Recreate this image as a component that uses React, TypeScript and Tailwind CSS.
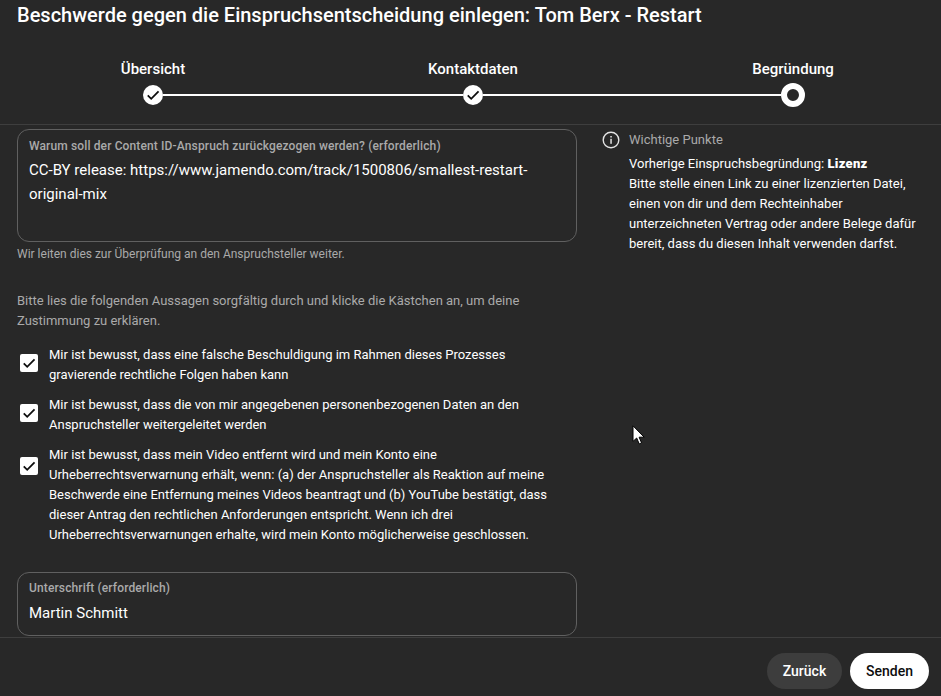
function Check({ size = 20 }: { size?: number }) {
  return (
    <svg width={size} height={size} viewBox="0 0 24 24" fill="none">
      <path d="M5 12.5l4.6 4.6L19.4 7.3" stroke="#0d0d0d" strokeWidth="2.4" />
    </svg>
  );
}

function StepDone() {
  return (
    <div className="flex h-5 w-5 shrink-0 items-center justify-center rounded-full bg-white">
      <Check size={18} />
    </div>
  );
}

function Agreement({ lines, long }: { lines: string[]; long?: boolean }) {
  return (
    <div className="flex items-start">
      <div
        className={`ml-[3px] flex h-[18px] w-[18px] shrink-0 items-center justify-center rounded-[2px] bg-white ${
          long ? "mt-[12px]" : "mt-[9px]"
        }`}
      >
        <Check size={22} />
      </div>
      <p className="ml-[11px] text-[13px] leading-5 text-white">
        {lines.map((l) => (
          <span key={l} className="block whitespace-nowrap">
            {l}
          </span>
        ))}
      </p>
    </div>
  );
}

export default function App() {
  return (
    <div className="relative flex h-[696px] w-[941px] flex-col overflow-hidden bg-[#282828] font-['Roboto',sans-serif] text-white">
      {/* Header */}
      <div className="h-[125px] shrink-0 border-b border-[#3e3e3e]">
        <h1 className="ml-[17px] pt-[3px] text-[20px] leading-6 font-medium">
          Beschwerde gegen die Einspruchsentscheidung einlegen: Tom Berx - Restart
        </h1>
        <div className="mt-[32px] ml-[93px] flex w-[760px] justify-between text-[15px] leading-5 font-medium">
          <span className="w-[120px] text-center">Übersicht</span>
          <span className="w-[120px] text-center">Kontaktdaten</span>
          <span className="w-[120px] text-center">Begründung</span>
        </div>
        <div className="mt-[4px] ml-[143px] flex items-center">
          <StepDone />
          <div className="h-0.5 w-[300px] bg-white" />
          <StepDone />
          <div className="h-0.5 w-[298px] bg-white" />
          <div className="h-6 w-6 shrink-0 rounded-full border-[6px] border-white" />
        </div>
      </div>

      {/* Body */}
      <div className="flex min-h-0 flex-1 overflow-hidden pt-1 pl-[17px]">
        <div className="w-[560px] shrink-0">
          <div className="h-[113px] rounded-xl border border-[#606060] px-[11px] pt-[7px]">
            <div className="text-[12px] leading-[18px] font-medium tracking-[0.13px] text-[#aaaaaa]">
              Warum soll der Content ID-Anspruch zurückgezogen werden? (erforderlich)
            </div>
            <div className="mt-[3px] text-[15px] leading-6">
              CC-BY release: https://www.jamendo.com/track/1500806/smallest-restart-
              <br />
              original-mix
            </div>
          </div>
          <p className="mt-[3px] text-[12px] leading-[18px] text-[#aaaaaa]">
            Wir leiten dies zur Überprüfung an den Anspruchsteller weiter.
          </p>
          <p className="mt-[28px] text-[13px] leading-5 text-[#aaaaaa]">
            Bitte lies die folgenden Aussagen sorgfältig durch und klicke die Kästchen an, um deine
            <br />
            Zustimmung zu erklären.
          </p>
          <div className="mt-[14px] flex flex-col gap-[10px]">
            <Agreement
              lines={[
                "Mir ist bewusst, dass eine falsche Beschuldigung im Rahmen dieses Prozesses",
                "gravierende rechtliche Folgen haben kann",
              ]}
            />
            <Agreement
              lines={[
                "Mir ist bewusst, dass die von mir angegebenen personenbezogenen Daten an den",
                "Anspruchsteller weitergeleitet werden",
              ]}
            />
            <Agreement
              long
              lines={[
                "Mir ist bewusst, dass mein Video entfernt wird und mein Konto eine",
                "Urheberrechtsverwarnung erhält, wenn: (a) der Anspruchsteller als Reaktion auf meine",
                "Beschwerde eine Entfernung meines Videos beantragt und (b) YouTube bestätigt, dass",
                "dieser Antrag den rechtlichen Anforderungen entspricht. Wenn ich drei",
                "Urheberrechtsverwarnungen erhalte, wird mein Konto möglicherweise geschlossen.",
              ]}
            />
          </div>
          <div className="mt-[27px] h-[64px] rounded-xl border border-[#606060] px-[11px] pt-[6px]">
            <div className="text-[12px] leading-[18px] font-medium tracking-[0.13px] text-[#aaaaaa]">
              Unterschrift (erforderlich)
            </div>
            <div className="mt-[4px] text-[15px] leading-6">Martin Schmitt</div>
          </div>
        </div>

        <div className="ml-[24px] flex items-start pt-[1px]">
          <svg width="20" height="20" viewBox="0 0 20 20" fill="none" className="shrink-0">
            <circle cx="10" cy="10" r="7.8" stroke="#e4e4e4" strokeWidth="1.4" />
            <rect x="9.3" y="8.8" width="1.5" height="5" fill="#e4e4e4" />
            <rect x="9.3" y="6" width="1.5" height="1.5" fill="#e4e4e4" />
          </svg>
          <div className="ml-[8px]">
            <div className="text-[13px] leading-5 text-[#aaaaaa]">Wichtige Punkte</div>
            <div className="mt-[4px] text-[13px] leading-5 whitespace-nowrap">
              Vorherige Einspruchsbegründung: <b className="font-black tracking-[0.3px]">Lizenz</b>
              <br />
              Bitte stelle einen Link zu einer lizenzierten Datei,
              <br />
              einen von dir und dem Rechteinhaber
              <br />
              unterzeichneten Vertrag oder andere Belege dafür
              <br />
              bereit, dass du diesen Inhalt verwenden darfst.
            </div>
          </div>
        </div>
      </div>

      {/* Footer */}
      <div className="flex h-[59px] shrink-0 items-start justify-end gap-2 border-t border-[#3e3e3e] pt-[15px] pr-3">
        <button className="h-9 w-[75px] rounded-full bg-[#3d3d3d] text-[14px] font-medium text-white">
          Zurück
        </button>
        <button className="h-9 w-[79px] rounded-full bg-white text-[14px] font-medium text-[#0d0d0d]">
          Senden
        </button>
      </div>

      {/* Mouse pointer caught in the capture */}
      <svg width="14" height="20" viewBox="0 0 14 20" className="absolute top-[425px] left-[632px]">
        <path
          d="M1 .8v15.6l3.7-3.4 2.5 5.9 2.4-1-2.5-5.7h5.1z"
          fill="#ffffff"
          stroke="#000000"
          strokeWidth="1"
        />
      </svg>
    </div>
  );
}
